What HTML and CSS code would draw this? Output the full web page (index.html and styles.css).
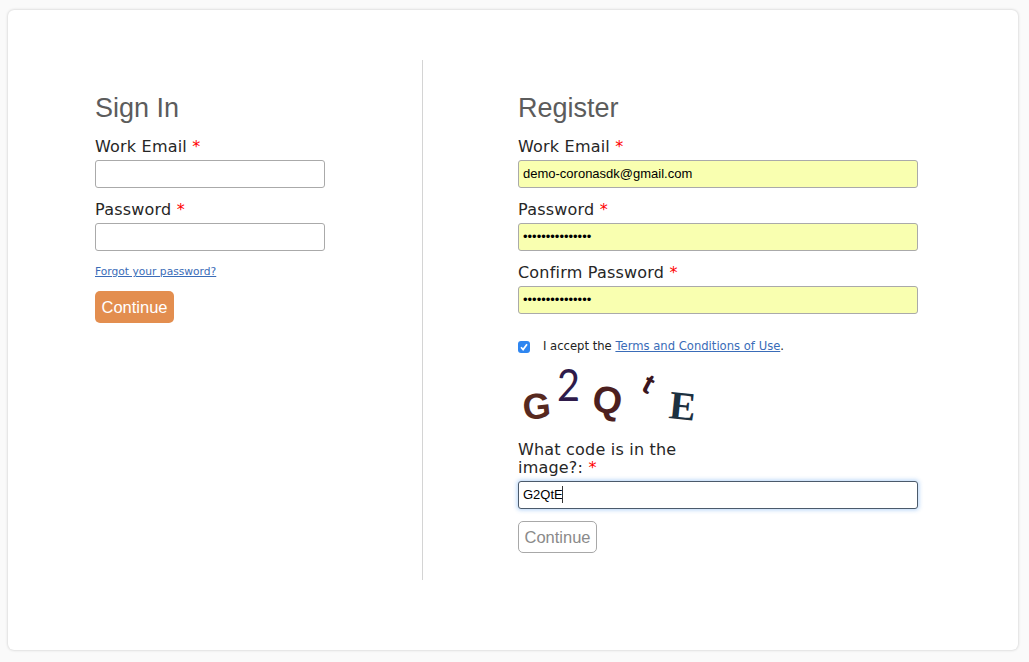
FILE: index.html
```html
<!DOCTYPE html>
<html lang="en">
<head>
<meta charset="utf-8">
<title>Sign In or Register</title>
<link rel="stylesheet" href="styles.css">
</head>
<body>
<main class="card">
  <section class="pane pane-left">
    <h2 class="title">Sign In</h2>
    <form class="form">
      <label class="label">Work Email <span class="req">*</span></label>
      <input class="field field-short" type="text">
      <label class="label">Password <span class="req">*</span></label>
      <input class="field field-short" type="password">
      <a class="forgot" href="#">Forgot your password?</a>
      <button class="btn btn-primary" type="button">Continue</button>
    </form>
  </section>
  <section class="pane pane-right">
    <h2 class="title">Register</h2>
    <form class="form">
      <label class="label">Work Email <span class="req">*</span></label>
      <input class="field field-auto" type="text" value="demo-coronasdk@gmail.com">
      <label class="label">Password <span class="req">*</span></label>
      <input class="field field-auto" type="password" value="aaaaaaaaaaaaaaa">
      <label class="label">Confirm Password <span class="req">*</span></label>
      <input class="field field-auto" type="password" value="aaaaaaaaaaaaaaa">
      <div class="accept">
        <span class="check"><svg width="8" height="8" viewBox="0 0 8 8"><path d="M1 4.3 3.1 6.6 7 1.2" fill="none" stroke="#fff" stroke-width="1.7"/></svg></span>
        <span class="accept-text">I accept the <a class="terms" href="#">Terms and Conditions of Use</a>.</span>
      </div>
      <svg class="captcha" width="200" height="78" viewBox="0 0 200 78" role="img" aria-label="captcha">
        <text class="cap cap-g" transform="translate(6 64) rotate(-6)">G</text>
        <text class="cap cap-2" transform="translate(39 45) scale(.9 1)">2</text>
        <text class="cap cap-q" transform="translate(73 55) rotate(8)">Q</text>
        <text class="cap cap-t" transform="translate(122 34) rotate(28)">t</text>
        <text class="cap cap-e" transform="translate(150 62) rotate(6)">E</text>
      </svg>
      <label class="label label-wrap">What code is in the image?: <span class="req">*</span></label>
      <div class="focus-wrap">
        <input class="field field-focus" type="text" value="G2QtE">
        <span class="caret"></span>
      </div>
      <button class="btn btn-muted" type="button">Continue</button>
    </form>
  </section>
</main>
</body>
</html>
```
FILE: styles.css
```css
* { box-sizing: border-box; }
html, body { margin: 0; height: 100%; }
body {
  background: #fafafa;
  padding: 10px 11px 11px 8px;
  font-family: "Liberation Sans", Arial, sans-serif;
}
.card {
  display: flex;
  align-items: flex-start;
  height: 640px;
  padding-top: 50px;
  background: #fff;
  border-radius: 6px;
  box-shadow: 0 0 3px rgba(0, 0, 0, 0.22);
}
.pane { height: 520px; }
.pane-left {
  width: 415px;
  padding-left: 87px;
  border-right: 1px solid #d4d4d4;
}
.pane-right {
  padding-left: 95px;
}
.title {
  margin: 30px 0 10px;
  height: 36px;
  font-size: 27px;
  line-height: 36px;
  font-weight: 400;
  color: #5c5c5c;
}
.form { display: flex; flex-direction: column; align-items: flex-start; }
.label {
  font-family: "DejaVu Sans", sans-serif;
  font-size: 16px;
  letter-spacing: 0.2px;
  line-height: 18px;
  padding-top: 2px;
  color: #262626;
  margin-bottom: 4px;
}
.req { color: #f00; }
.field {
  display: block;
  height: 28px;
  padding: 0 4px 2px;
  margin: 0 0 11px;
  border: 1px solid #aaa;
  border-radius: 3px;
  background: #fff;
  font-family: "Liberation Sans", Arial, sans-serif;
  font-size: 13px;
  color: #000;
  outline: none;
}
.field-short { width: 230px; }
.field-auto { width: 400px; background: #f9ffb0; }
.forgot {
  margin-top: 3px;
  font-family: "DejaVu Sans", sans-serif;
  font-size: 10.7px;
  line-height: 14px;
  color: #3a6cb8;
}
.btn {
  height: 32px;
  width: 79px;
  padding: 1px 0 0;
  border-radius: 5px;
  font-family: "Liberation Sans", Arial, sans-serif;
  font-size: 16.5px;
}
.btn-primary {
  margin-top: 12px;
  border: 0;
  background: #e38e4f;
  color: #fff;
}
.btn-muted {
  margin-top: 12px;
  border: 1px solid #a8a8a8;
  background: #fff;
  color: #8a8a8a;
}
.accept {
  display: flex;
  align-items: center;
  gap: 13px;
  margin-top: 11px;
  height: 18px;
  font-family: "DejaVu Sans", sans-serif;
  font-size: 11.6px;
  color: #222;
}
.accept-text { padding-top: 2px; }
.check {
  display: flex;
  align-items: center;
  justify-content: center;
  width: 12px;
  height: 12px;
  margin-top: 3px;
  border-radius: 3px;
  background: #2f86f0;
}
.terms { color: #3a6cb8; }
.captcha { display: block; margin-top: 2px; }
.cap { font-family: "Liberation Sans", sans-serif; }
.cap-g { font-size: 36px; font-weight: 700; fill: #57291f; }
.cap-2 { font-size: 44px; font-family: Lato, sans-serif; font-weight: 400; fill: #2f1b4a; }
.cap-q { font-size: 38px; font-weight: 700; fill: #4c1f1f; }
.cap-t { font-size: 28px; font-weight: 700; fill: #3a1620; }
.cap-e { font-family: "Liberation Serif", serif; font-size: 40px; font-weight: 700; fill: #1c3040; }
.label-wrap {
  width: 190px;
  padding-top: 0;
  margin-top: 7px;
  margin-bottom: 4px;
}
.focus-wrap { position: relative; width: 400px; }
.field-focus {
  width: 400px;
  height: 28px;
  margin: 0;
  border-color: #4b5a6b;
  box-shadow: 0 0 4px 1px rgba(90, 160, 240, 0.45);
}
.caret {
  position: absolute;
  left: 44px;
  top: 5px;
  width: 1px;
  height: 17px;
  background: #333;
}
```
